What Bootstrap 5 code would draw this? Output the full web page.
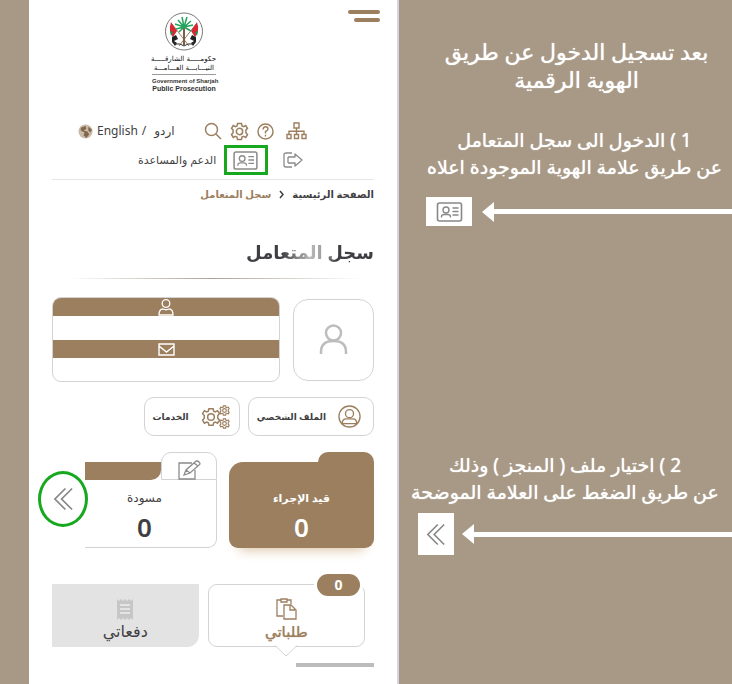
<!DOCTYPE html>
<html lang="ar">
<head>
<meta charset="utf-8">
<meta name="viewport" content="width=device-width, initial-scale=1">
<title>سجل المتعامل</title>
<link href="https://cdn.jsdelivr.net/npm/bootstrap@5.3.0/dist/css/bootstrap.min.css" rel="stylesheet">
<style>
:root{--sand:#a79985;--bronze:#9c7f5f;--line:#d3d3d6;--ink:#3f3f43}
body{background:var(--sand);font-family:"Noto Sans","DejaVu Sans",sans-serif;color:var(--ink)}
.guide-page{display:grid;grid-template-columns:29fr 370fr minmax(0,333fr);min-height:100vh}
.phone{grid-column:2;background:#fff;border-right:2px solid #d5d3df;padding:10px 23px 16px}
svg{display:block;fill:none;stroke:currentColor;flex:none}
button{background:none;border:0;padding:0;color:inherit}
a{color:inherit;text-decoration:none}
.top-area{height:106px}
.menu-btn{width:32px;height:12px;padding:0;margin-right:-6px}
.menu-btn i{display:block;height:4px;border-radius:2px;background:var(--bronze);margin-bottom:4px}
.menu-btn i+i{margin-left:6px}
.crest{width:64px;margin-left:100px;padding-top:2px;color:#333;font-family:"Liberation Sans",sans-serif;font-size:7px;line-height:8px;font-weight:700}
.crest-gov{font-size:6px}
.crest-ar{font-family:"DejaVu Sans",sans-serif;font-size:7px;line-height:9px;font-weight:400;color:#111}
.crest hr{margin:1px 0 2px;opacity:.5}
.tools{height:30px;padding-left:26px;padding-right:67px;font-size:12px;line-height:16px}
.tools svg,.accent{color:var(--bronze)}
.tools-low{height:28px;padding-left:86px;padding-right:71px;font-size:11px}
.id-mark{border:3px solid #17a81f;width:44px;height:30px}
.grey-icon,.tools-low svg{color:#8b8b8b}
.trail{border-top:1px solid #e6e6e6;margin-top:5px;height:30px;font-size:10px;font-weight:700}
.page-title{font-size:18px;line-height:30px;font-weight:700;margin:28px 0 11px;background:linear-gradient(90deg,#3f3f43 0 28%,#b8b8b8 50%,#999 62%,#3f3f43 70%);-webkit-background-clip:text;background-clip:text;color:transparent;width:max-content}
.fade-rule{height:1px;background:linear-gradient(90deg,transparent 5%,#aaa297 50%,transparent 96%)}
.person-row{margin-top:18px;gap:13px}
.info-box{border:1px solid var(--line);border-radius:9px;overflow:hidden;height:85px}
.info-bar{height:18px;background:var(--bronze);color:#fff}
.info-bar+.info-bar{margin-top:24px}
.avatar{width:81px;height:82px;border:1px solid var(--line);border-radius:15px;color:#bdbdbd}
.pills{margin-top:15px;gap:8px}
.pill{border:1px solid var(--line);border-radius:10px;height:39px;font-size:9px;font-weight:700;padding:0 12px 0 8px;gap:12px}
.pill:last-child{padding-right:9px}
.folders{margin-top:16px;gap:12px;height:97px}
.folder{text-align:center;width:145px}
.folder-tab{width:56px;height:10px;margin-left:auto;border-radius:10px 10px 0 0;background:var(--bronze)}
.folder-body{background:var(--bronze);color:#fff;border-radius:14px 0 9px 9px;height:86px;padding-top:26px;box-shadow:0 12px 12px -10px #dcc4a4}
.folder-name{font-size:12px;line-height:20px}
.folder-name.fw-bold{font-size:11px}
.folder-num{font-size:26px;line-height:38px;font-weight:600}
.draft{width:132px}
.draft-cap{width:76px;height:18px;background:var(--bronze);border-radius:0 0 10px 0;margin-top:10px}
.draft-tab{height:28px;border:1px solid var(--line);border-radius:10px 10px 0 0}
.draft-body{height:68px;border:1px solid var(--line);border-width:0 1px 1px 0;border-radius:0 0 9px 0;padding:8px 12px 0 0}
.next-btn{width:50px;height:56px;border:3px solid #17a81f;border-radius:50%;color:#888;margin-left:-14px;margin-top:19px;margin-right:-15px}
.tab-row{margin-top:35px;gap:9px}
.tab-box{height:63px;font-size:16px;line-height:22px;padding-top:10px}
.pay-tab{flex:148 1 0;background:#e3e3e3;border-radius:0 0 12px 0}
.req-tab{flex:157 1 0;border:1px solid var(--line);border-radius:9px;color:var(--bronze);font-size:15px;text-shadow:0 0 1px var(--bronze);margin-right:9px;position:relative;padding-top:9px}
.req-count{position:absolute;right:4px;top:-11px;background:var(--bronze);border-radius:11px;color:#fff;font-size:14px;font-weight:700;line-height:22px;width:43px;box-shadow:0 0 0 3px #fff;text-shadow:none}
.req-tip{position:absolute;left:50%;bottom:-11px;margin-left:-11px}
.scroll-piece{height:4px;width:78px;background:#bcbcbc;margin:16px 0 0 auto}
.lesson{grid-column:3;color:#fff;padding-top:37px;text-align:center;text-shadow:0 0 1px #fff}
.lesson h1{font-size:22px;line-height:28px;font-weight:400;margin:0 22px 0 44px;white-space:nowrap}
.lesson p{font-size:19px;line-height:27px;margin:0 9px 0 27px}
.lesson .step-one{margin-top:34px}
.lesson .step-two{margin-top:226px;margin-right:13px;margin-left:12px}
.step-mark{margin-left:27px;margin-top:16px}
.second-mark{margin-left:19px;margin-top:7px}
.mark-box{background:#fff;width:46px;height:29px;color:#888}
.second-mark .mark-box{width:36px;height:42px}
.arrow-tip{border:10px solid transparent;border-right:12px solid #fff;border-left:0;margin-left:10px}
.second-mark .arrow-tip{margin-left:8px}
.arrow-line{height:5px;background:#fff}
</style>
<script src="https://cdn.jsdelivr.net/npm/bootstrap@5.3.0/dist/js/bootstrap.bundle.min.js"></script>
</head>
<body>
<svg width="0" height="0" class="position-absolute" aria-hidden="true">
<symbol id="idcard" viewBox="0 0 26 20"><rect x="1" y="1" width="24" height="18" rx="2" stroke-width="1.6"/><circle cx="9.500" cy="8" r="3" stroke-width="1.400"/><path d="M5 15.500v-1q0-2 3-2h3q3 0 3 2v1M16 6h6M16 9.500h6M16 13h6" stroke-width="1.400"/></symbol>
<symbol id="chev" viewBox="0 0 22 26"><path d="M13 2 2 13l11 11M20 2 9 13l11 11" stroke-width="1.800"/></symbol>
<symbol id="cog" viewBox="0 0 24 24"><path d="m9.500 2-.7 3-2 .9-2.700-1.500L1.900 8l2 2.200v3.400l-2 2.200 2.200 3.700 2.700-1.400 2 .9.700 3h5l.7-3 2-.9 2.700 1.400 2.200-3.700-2-2.200v-3.400l2-2.200-2.200-3.600-2.700 1.500-2-.9-.7-3z"/><circle cx="12" cy="12" r="4"/></symbol>
</svg>
<div class="guide-page">
<main class="phone">
  <header class="top-area d-flex justify-content-between align-items-start">
    <div class="crest text-nowrap text-center">
      <svg class="mx-auto mb-1" width="40" height="39" viewBox="0 0 40 39" aria-hidden="true">
        <circle cx="20" cy="19.500" r="18.500" stroke="#555" stroke-width=".8"/>
        <path d="m8 12 17 22M32 12 15 34" stroke="#79634b" stroke-width=".8"/>
        <path d="m7 10 6 9-4 6q-5-5-2-15zM33 10l-6 9 4 6q5-5 2-15z" fill="#d92632" stroke="none"/>
        <path d="m6 19 3 1-2 4zM34 19l-3 1 2 4z" fill="#159552" stroke="none"/>
        <path d="m8 25 4-2 2 4-4 2 3 2-2 3-3-4zM32 25l-4-2-2 4 4 2-3 2 2 3 3-4z" fill="#222" stroke="none"/>
        <path d="M20 14v19" stroke="#805c44" stroke-width="2"/>
        <path d="M20 15 12 17M20 15 11 12M20 15l-6-7M20 15l-2-10M20 15l3-10M20 15l7-6M20 15l9-2M20 15l7 4M20 15l-5 5" stroke="#24a35c" stroke-width="1.500"/>
        <path d="M10 32h6l4 2 4-2h6" stroke="#333"/>
      </svg>
      <div class="crest-ar" dir="rtl">حكومـــــة الشارقـــــة</div>
      <div class="crest-ar" dir="rtl">النيـــابـــة العـــامـــة</div>
      <hr>
      <div class="crest-gov">Government of Sharjah</div>
      <div>Public Prosecution</div>
    </div>
    <button class="menu-btn" aria-label="القائمة"><i></i><i></i></button>
  </header>
  <nav class="tools d-flex align-items-center justify-content-between">
    <div class="d-flex align-items-center">
      <svg width="15" height="15" viewBox="0 0 16 16"><g stroke="none"><circle cx="8" cy="8" r="7.500" fill="#c9baa9"/><path d="m3 4 5-2 1 3-3 2 4 1 2 3-3 4-3-3 1-3-4-2zM11 3l4 3-2 3-2-2z" fill="#83674b"/></g></svg>
      <a href="#" class="ms-1">English</a><span class="ms-1">/</span><a href="#" class="ms-2">اردو</a>
    </div>
    <div class="d-flex align-items-center gap-2">
      <a href="#" aria-label="بحث"><svg width="18" height="18" viewBox="0 0 18 18" stroke-width="1.500"><circle cx="7.500" cy="7.500" r="6"/><path d="m12 12 5 5"/></svg></a>
      <a href="#" aria-label="الإعدادات"><svg width="19" height="19" stroke-width="1.900"><use href="#cog"/></svg></a>
      <a href="#" aria-label="أسئلة"><svg width="17" height="17" viewBox="0 0 18 18" stroke-width="1.500"><circle cx="9" cy="9" r="8"/><path d="M6.500 7q0-3 2.600-3 2.500 0 2.500 2.400 0 1.600-2.600 2.600v2M9 12.500v1.800"/></svg></a>
      <a href="#" aria-label="خريطة الموقع" class="ms-1"><svg width="21" height="18" viewBox="0 0 21 18" stroke-width="1.400"><path d="M8 1h5v5H8zM1 12.500h4v4H1zM8.500 12.500h4v4h-4zM16 12.500h4v4h-4zM10.500 6v6.500M3 12.500V9.300h15v3.200"/></svg></a>
    </div>
  </nav>
  <nav class="tools-low d-flex align-items-center justify-content-between">
    <a href="#">الدعم والمساعدة</a>
    <a href="#" class="id-mark d-flex align-items-center justify-content-center" aria-label="سجل المتعامل"><svg width="25" height="19"><use href="#idcard"/></svg></a>
    <a href="#" class="ms-2" aria-label="خروج"><svg width="20" height="16" viewBox="0 0 20 16" stroke-width="1.300" stroke-linejoin="round"><path d="M9 1H3Q1 1 1 3v10q0 2 2 2h6M5 5v6M5 5h7V2l7 6-7 6v-3H5"/></svg></a>
  </nav>
  <div class="trail d-flex align-items-center gap-2" dir="rtl"><a href="#">الصفحة الرئيسية</a><svg width="5" height="9" viewBox="0 0 5 9" stroke-width="1.500"><path d="m1 1 3 3.500L1 8"/></svg><span class="accent">سجل المتعامل</span></div>
  <h2 class="page-title ms-auto" dir="rtl">سجل المتعامل</h2>
  <div class="fade-rule"></div>
  <section class="person-row d-flex align-items-center">
    <div class="info-box flex-grow-1">
      <div class="info-bar d-flex justify-content-center align-items-center"><svg width="16" height="17" viewBox="0 0 16 17" stroke-width="1.300"><circle cx="8" cy="4.500" r="3.800"/><path d="M1 16q0-6 4-6 3 1.500 6 0 4 0 4 6z"/></svg></div>
      <div class="info-bar d-flex justify-content-center align-items-center"><svg width="17" height="13" viewBox="0 0 17 13" stroke-width="1.400"><path d="M1 1h15v11H1zM1 3l7.500 6L16 3"/></svg></div>
    </div>
    <div class="avatar d-flex align-items-center justify-content-center"><svg width="29" height="31" viewBox="0 0 29 31" stroke-width="2.500"><circle cx="14.500" cy="9" r="7.500"/><path d="M2 30v-2q0-11 12.500-11T27 28v2"/></svg></div>
  </section>
  <section class="pills d-flex justify-content-start" dir="rtl">
    <button class="pill d-flex align-items-center flex-shrink-0"><svg class="accent" width="23" height="23" viewBox="0 0 24 24" stroke-width="1.400"><circle cx="12" cy="12" r="11"/><circle cx="12" cy="9" r="4.200"/><path d="M4.500 19.500q0-5 4-5h7q4 0 4 5z"/></svg><span>الملف الشخصي</span></button>
    <button class="pill d-flex align-items-center flex-shrink-0"><svg class="accent" width="29" height="24" viewBox="0 0 29 24" stroke-width="1.800"><use href="#cog" x="0" y="2" width="20" height="20"/><g stroke-width="2.500"><use href="#cog" x="18" y="0" width="11" height="11"/><use href="#cog" x="18" y="13" width="11" height="11"/></g></svg><span>الخدمات</span></button>
  </section>
  <section class="folders d-flex align-items-start justify-content-between">
    <button class="next-btn d-flex align-items-center justify-content-center flex-shrink-0" aria-label="التالي"><svg width="21" height="26"><use href="#chev"/></svg></button>
    <div class="folder draft flex-shrink-0">
      <div class="d-flex"><div class="draft-cap"></div><div class="draft-tab flex-grow-1 d-flex align-items-center justify-content-center grey-icon pt-2"><svg width="23" height="20" viewBox="0 0 23 20" stroke-width="1.300"><path d="M14 3H1v16h16v-9M6 15l2-5 9-8q2-2 4 0t0 3l-9 8zM16 3l4 3M8 10l4 3"/></svg></div></div>
      <div class="draft-body"><div class="folder-name">مسودة</div><div class="folder-num">0</div></div>
    </div>
    <div class="folder flex-shrink-0"><div class="folder-tab"></div><div class="folder-body"><div class="folder-name fw-bold">قيد الإجراء</div><div class="folder-num">0</div></div></div>
  </section>
  <section class="tab-row d-flex">
    <button class="tab-box pay-tab"><svg class="mx-auto" width="18" height="21" viewBox="0 0 18 21"><path d="m1 0 2 2 2-2 2 2 2-2 2 2 2-2 2 2 2-2v21l-2-2-2 2-2-2-2 2-2-2-2 2-2-2-2 2z" fill="#c6c6c6" stroke="none"/><path d="M4 6h10M4 10h10M4 14h10" stroke="#eee" stroke-width="1.300"/></svg>دفعاتي</button>
    <button class="tab-box req-tab"><svg class="mx-auto" width="21" height="22" viewBox="0 0 21 22" stroke-width="1.300"><path d="M7 18H1V2h4V1h6v1h4v4M5 2v2h6V2M8 7h7l5 5v9H8zM14 7v5h5"/></svg>طلباتي<span class="req-count">0</span><svg class="req-tip" width="22" height="12" viewBox="0 0 22 12"><path d="M0 0h22L11 11z" fill="#fff" stroke="none"/><path d="M0 .5 11 11 22 .5" stroke="#d3d3d6"/></svg></button>
  </section>
  <div class="scroll-piece"></div>
</main>
<aside class="lesson">
  <h1 dir="rtl">بعد تسجيل الدخول عن طريق<br>الهوية الرقمية</h1>
  <p class="step-one text-nowrap" dir="rtl">1 ) الدخول الى سجل المتعامل<br>عن طريق علامة الهوية الموجودة اعلاه</p>
  <div class="step-mark d-flex align-items-center"><div class="mark-box d-flex align-items-center justify-content-center"><svg width="27" height="20"><use href="#idcard"/></svg></div><div class="arrow-tip"></div><div class="arrow-line flex-grow-1"></div></div>
  <p class="step-two text-nowrap" dir="rtl">2 ) اختيار ملف ( المنجز ) وذلك<br>عن طريق الضغط على العلامة الموضحة</p>
  <div class="step-mark second-mark d-flex align-items-center"><div class="mark-box d-flex align-items-center justify-content-center"><svg width="20" height="25"><use href="#chev"/></svg></div><div class="arrow-tip"></div><div class="arrow-line flex-grow-1"></div></div>
</aside>
</div>
</body>
</html>
